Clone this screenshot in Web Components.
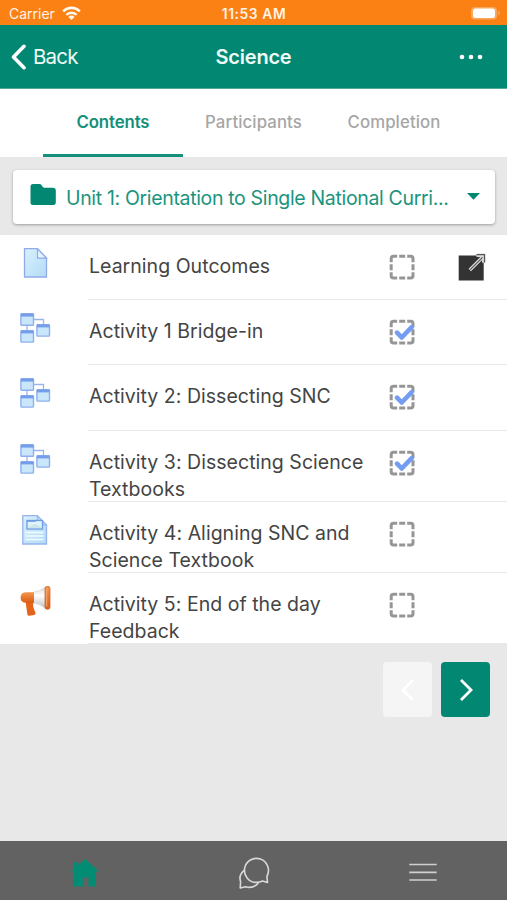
<!DOCTYPE html>
<html lang="en">
<head>
<meta charset="utf-8">
<title>Science</title>
<style>
  body {
    margin: 0;
    background: #e8e8e8;
    font-family: Inter, "Liberation Sans", sans-serif;
  }
</style>
</head>
<body>
<course-app>
  <status-bar slot="top" carrier="Carrier" time="11:53 AM"></status-bar>
  <nav-header slot="top" back="Back">Science</nav-header>
  <tab-strip slot="top">
    <tab-item active>Contents</tab-item>
    <tab-item>Participants</tab-item>
    <tab-item>Completion</tab-item>
  </tab-strip>
  <section-picker>Unit 1: Orientation to Single National Curri...</section-picker>
  <activity-list>
    <activity-row icon="page" external>Learning Outcomes</activity-row>
    <activity-row icon="tree" done>Activity 1 Bridge-in</activity-row>
    <activity-row icon="tree" done>Activity 2: Dissecting SNC</activity-row>
    <activity-row icon="tree" done tall>Activity 3: Dissecting Science<br>Textbooks</activity-row>
    <activity-row icon="document" tall>Activity 4: Aligning SNC and<br>Science Textbook</activity-row>
    <activity-row icon="megaphone" tall>Activity 5: End of the day<br>Feedback</activity-row>
  </activity-list>
  <section-pager></section-pager>
  <bottom-bar slot="bottom"></bottom-bar>
</course-app>

<script>
// Small helper: open shadow root with the given markup
function render(el, html) {
  el.attachShadow({ mode: 'open' }).innerHTML = html;
}

class CourseApp extends HTMLElement {
  connectedCallback() {
    render(this, `
      <style>
        :host {
          display: flex;
          flex-direction: column;
          height: 900px;
          overflow: hidden;
          background: #e8e8e8;
        }
        main {
          flex: 1;
          min-height: 0;
        }
      </style>
      <slot name="top"></slot>
      <main><slot></slot></main>
      <slot name="bottom"></slot>
    `);
  }
}

class StatusBar extends HTMLElement {
  connectedCallback() {
    render(this, `
      <style>
        :host {
          display: grid;
          grid-template-columns: 1fr auto 1fr;
          align-items: center;
          box-sizing: border-box;
          height: 25px;
          padding: 2px 6px 0 9px;
          background: #fb8114;
          color: #fff3e6;
          font-size: 14px;
        }
        .left {
          display: flex;
          align-items: center;
          gap: 7px;
        }
        .time {
          margin-right: 2px;
          font-size: 13.8px;
          font-weight: 600;
          letter-spacing: 0.6px;
        }
        .battery {
          justify-self: end;
        }
        svg {
          display: block;
        }
      </style>
      <div class="left">
        <span>${this.getAttribute('carrier')}</span>
        <svg width="19" height="15" viewBox="0 0 19 15" fill="none" stroke="#fff8f0" stroke-width="2.6">
          <path d="M1.2 5.4a11.6 11.6 0 0 1 16.6 0"/>
          <path d="M4.4 8.8a7.2 7.2 0 0 1 10.2 0"/>
          <path d="M9.5 14 6.4 10.9a4.4 4.4 0 0 1 6.2 0z" fill="#fff8f0" stroke="none"/>
        </svg>
      </div>
      <span class="time">${this.getAttribute('time')}</span>
      <svg class="battery" width="31" height="15" viewBox="0 0 31 15">
        <rect x="1" y="1" width="26" height="12.5" rx="4" fill="#fba75c"/>
        <rect x="3" y="2.5" width="22" height="9.5" rx="2.5" fill="#fff"/>
        <path d="M28.2 5v4.4q1.6-.6 1.6-2.2t-1.6-2.2" fill="#fba75c"/>
      </svg>
    `);
  }
}

class NavHeader extends HTMLElement {
  connectedCallback() {
    render(this, `
      <style>
        :host {
          display: grid;
          grid-template-columns: 1fr auto 1fr;
          align-items: center;
          box-sizing: border-box;
          height: 64px;
          padding: 0 24px 0 11px;
          background: #028872;
          border-bottom: 1px solid #52a897;
          color: #eefaf7;
        }
        .back {
          display: flex;
          align-items: center;
          gap: 7px;
          font-size: 20.5px;
          letter-spacing: -0.8px;
        }
        h1 {
          margin: 0 -13px 0 0;
          font-size: 20px;
          font-weight: 600;
          letter-spacing: -0.2px;
        }
        .more {
          justify-self: end;
        }
      </style>
      <div class="back">
        <svg width="15" height="26" viewBox="0 0 15 26" fill="none" stroke="#fff" stroke-width="3.6" stroke-linecap="round" stroke-linejoin="round">
          <path d="M13 2.3 2.5 13 13 23.7"/>
        </svg>
        <span>${this.getAttribute('back')}</span>
      </div>
      <h1><slot></slot></h1>
      <svg class="more" width="24" height="6" viewBox="0 0 24 6" fill="#fff">
        <circle cx="3" cy="3" r="2.3"/>
        <circle cx="12" cy="3" r="2.3"/>
        <circle cx="21" cy="3" r="2.3"/>
      </svg>
    `);
  }
}

class TabStrip extends HTMLElement {
  connectedCallback() {
    render(this, `
      <style>
        :host {
          display: grid;
          grid-template-columns: repeat(3, 140.5px);
          justify-content: center;
          height: 68px;
          background: #fff;
        }
      </style>
      <slot></slot>
    `);
  }
}

class TabItem extends HTMLElement {
  connectedCallback() {
    render(this, `
      <style>
        :host {
          display: flex;
          align-items: center;
          justify-content: center;
          box-sizing: border-box;
          padding-top: 1px;
          border-bottom: 3px solid transparent;
          color: #a6a6a6;
          font-size: 16.8px;
          font-weight: 500;
          letter-spacing: 0.1px;
        }
        :host([active]) {
          border-color: #14917a;
          color: #158f79;
          font-weight: 600;
          letter-spacing: -0.1px;
        }
      </style>
      <slot></slot>
    `);
  }
}

class SectionPicker extends HTMLElement {
  connectedCallback() {
    render(this, `
      <style>
        :host {
          display: block;
          padding: 13px 12px 11px 13px;
        }
        .card {
          display: flex;
          align-items: center;
          box-sizing: border-box;
          height: 54px;
          padding: 0 15px 0 17px;
          border-radius: 4px;
          background: #fff;
          box-shadow: 0 1px 3px rgba(0, 0, 0, 0.32);
          color: #1b947d;
          font-size: 19.5px;
          letter-spacing: -0.34px;
        }
        .folder {
          margin-top: -4px;
        }
        .label {
          flex: 1;
          margin-left: 10px;
          padding-top: 1px;
          white-space: nowrap;
        }
        .caret {
          margin-top: -2px;
        }
      </style>
      <div class="card">
        <svg class="folder" width="26" height="22" viewBox="0 0 26 22">
          <path d="M3 0h6.5q1.3 0 2 1l1.3 2q.5.8 1.7.8H23q2.8 0 2.8 2.8v11.6Q25.800 21 23 21H3Q.5 21 .5 18.500V2.500Q.5 0 3 0z" fill="#028872"/>
        </svg>
        <span class="label"><slot></slot></span>
        <svg class="caret" width="13" height="7" viewBox="0 0 13 7"><path d="M0 0h13L6.500 6.800z" fill="#028872"/></svg>
      </div>
    `);
  }
}

class ActivityList extends HTMLElement {
  connectedCallback() {
    render(this, `
      <style>
        :host {
          display: block;
          background: #fff;
        }
      </style>
      <slot></slot>
    `);
  }
}

const windowShape = (x, y) => `
  <rect x="${x}" y="${y}" width="12.600" height="11.500" rx="0.800" fill="#c9e6fa" stroke="#8fb0ee" stroke-width="1.400"/>
  <path d="M${x} ${y + 1.3}h12.600" stroke="#759eea" stroke-width="3"/>`;

const ICONS = {
  page: `
    <path d="M4.500 .7h13l9 9.300v19h-22z" fill="url(#sky)" stroke="#91aae8" stroke-width="1.300"/>
    <path d="M17.500 .9v9.200h9z" fill="#e4f5ff" stroke="#91aae8" stroke-width="1.200"/>`,
  tree: `
    <path d="M14 6.500h9.500V12M7 12v6" fill="none" stroke="#9ab5e8" stroke-width="1.300"/>
    ${windowShape(0.9, 0.8)}${windowShape(0.9, 17.6)}${windowShape(16.9, 11.6)}`,
  document: `
    <path d="M2.800 .7h14.500l9.200 9.300v19H2.800z" fill="url(#sky)" stroke="#96b3ec" stroke-width="1.300"/>
    <path d="M17.300 .8v9.200h9.100z" fill="#b5d8f8" stroke="#96b3ec"/>
    <rect x="7" y="5.500" width="15.500" height="8.500" fill="#dff3fd" stroke="#719ce0" stroke-width="1.300"/>
    <path d="M7 6h9" stroke="#6d9ae2" stroke-width="1.600"/>
    <path d="M8 13 14 9l4 1 4 3z" fill="#a8d4c4" opacity=".4"/>
    <path d="M5.500 17.500h18M5.500 21h18M5.500 24.500h18" stroke="#f2fbff" stroke-width="1.400"/>`,
  megaphone: `
    <path d="M5.500 15.500h8l-.5 4.500 2.500 7q.3 1.500-1.200 1.900l-5 .8q-1.600.2-1.900-1.300z" fill="#e4641c"/>
    <path d="M13 6.300Q20 5.500 25.500 1v21.500Q20 17.500 13 16.800z" fill="url(#silver)" stroke="#d2d2d2" stroke-width=".7"/>
    <path d="M14 6.200H5.500Q.6 6.800.6 11.500t4.900 5.200H14z" fill="url(#orange)"/>
    <rect x="25" y=".3" width="5" height="23" rx="2.300" fill="url(#orange)" stroke="#cf5b1b" stroke-width=".7"/>
    <path d="M26.700 2.500v18" stroke="#f7ae72" stroke-width="1"/>`
};

class ActivityRow extends HTMLElement {
  connectedCallback() {
    const check = this.hasAttribute('done')
      ? '<path d="M8 13.600l4.700 4.900L22.700 8.200" fill="none" stroke="#739cf2" stroke-width="4.600" stroke-linecap="round" stroke-linejoin="round"/>'
      : '';
    const external = this.hasAttribute('external')
      ? `<svg class="external" width="28" height="28" viewBox="0 0 28 28">
          <rect x=".7" y="2.500" width="25" height="25" fill="#333"/>
          <path d="M11.800 17 25 3.800M18.500 2.200h7.300v7.500" fill="none" stroke="#ddd" stroke-width="3.400"/>
          <path d="M12.200 16.600 24.500 4.300M18.500 1.600h8v8" fill="none" stroke="#555" stroke-width="1.200"/>
        </svg>`
      : '';
    render(this, `
      <style>
        :host {
          display: grid;
          grid-template-columns: 88px 301px 69px 1fr;
          grid-template-rows: 100%;
          align-items: start;
          height: 65.200px;
          color: #444;
          font-size: 19.5px;
          line-height: 27px;
        }
        :host([tall]) {
          height: 71.200px;
        }
        .icon {
          margin: 13px 0 0 20px;
        }
        .body {
          grid-column: 2 / -1;
          grid-row: 1;
          box-sizing: border-box;
          height: 100%;
          padding: 18px 0 0 1px;
          border-bottom: 1px solid #e9e9e9;
          letter-spacing: 0.030px;
          white-space: nowrap;
        }
        .box {
          grid-column: 3;
          grid-row: 1;
          margin-top: 19px;
        }
        .external {
          grid-column: 4;
          grid-row: 1;
          margin-top: 18px;
        }
      </style>
      <svg class="icon" width="31" height="30" viewBox="0 0 31 30">
        <defs>
          <linearGradient id="sky" x1="0" y1="0" x2="1" y2="1">
            <stop stop-color="#d9f0fc"/><stop offset="1" stop-color="#b2dcf7"/>
          </linearGradient>
          <linearGradient id="orange" x1="0" y1="0" x2="0" y2="1">
            <stop stop-color="#f4964e"/><stop offset="1" stop-color="#db5b13"/>
          </linearGradient>
          <linearGradient id="silver" x1="0" y1="0" x2="0" y2="1">
            <stop stop-color="#d6d6d6"/><stop offset=".4" stop-color="#fff"/><stop offset="1" stop-color="#bebebe"/>
          </linearGradient>
        </defs>
        ${ICONS[this.getAttribute('icon')]}
      </svg>
      <div class="body"><slot></slot></div>
      <svg class="box" width="26" height="26" viewBox="0 0 26 26">
        <path d="M2.200 8.200V4.500q0-2.300 2.300-2.300h3.700M18.200 2.200h3.500q2.300 0 2.300 2.300v3.700M24 18.200v3.500q0 2.300-2.300 2.300h-3.500M8.200 24H4.500q-2.300 0-2.300-2.300v-3.500M10.200 2.200h6M10.200 24h6M2.200 10.200v6M24 10.200v6" fill="none" stroke="#969696" stroke-width="3"/>
        ${check}
      </svg>
      ${external}
    `);
  }
}

class SectionPager extends HTMLElement {
  connectedCallback() {
    render(this, `
      <style>
        :host {
          display: flex;
          justify-content: flex-end;
          gap: 9px;
          padding: 18px 17px 0 0;
        }
        button {
          display: grid;
          place-items: center;
          width: 49px;
          height: 55px;
          padding: 0;
          border: 0;
          border-radius: 4px;
          background: #028872;
        }
        button:disabled {
          background: #f5f5f5;
        }
        svg {
          fill: none;
          stroke: #fff;
          stroke-width: 2.8;
        }
      </style>
      <button disabled aria-label="Previous"><svg width="14" height="22" viewBox="0 0 14 22"><path d="M12 1 2 11l10 10"/></svg></button>
      <button aria-label="Next"><svg width="14" height="22" viewBox="0 0 14 22"><path d="M2 1l10 10L2 21"/></svg></button>
    `);
  }
}

class BottomBar extends HTMLElement {
  connectedCallback() {
    render(this, `
      <style>
        :host {
          display: grid;
          grid-template-columns: repeat(3, 1fr);
          place-items: center;
          box-sizing: border-box;
          height: 59px;
          padding-top: 4px;
          background: #626262;
        }
      </style>
      <svg width="28" height="30" viewBox="0 0 28 30">
        <path d="M14 1 27 12.500l-2 1.500V28.500h-7.500v-9h-5.600v9H2.200V14L.8 12.800 3 10.500V4.200h4.300v3z" fill="#028c74"/>
      </svg>
      <svg width="32" height="32" viewBox="0 0 32 32" fill="none" stroke="#d9d9d9" stroke-width="1.600" stroke-linejoin="round">
        <path d="M29.500 25.500l-.6-6.200A12 12 0 1 0 18.500 25.400q3.300 0 6.100-1.400z"/>
        <path d="M6.700 13Q1.500 17 2 22l.6 3-.4 6 5.300-1.300q6 2 10.700-1.500 1.800-1.300 2.300-3"/>
      </svg>
      <svg width="28" height="19" viewBox="0 0 28 19" fill="none" stroke="#cfcfcf" stroke-width="1.700">
        <path d="M.3 1.500h27.400M.3 9.300h27.400M.3 17h27.400"/>
      </svg>
    `);
  }
}

customElements.define('course-app', CourseApp);
customElements.define('status-bar', StatusBar);
customElements.define('nav-header', NavHeader);
customElements.define('tab-strip', TabStrip);
customElements.define('tab-item', TabItem);
customElements.define('section-picker', SectionPicker);
customElements.define('activity-list', ActivityList);
customElements.define('activity-row', ActivityRow);
customElements.define('section-pager', SectionPager);
customElements.define('bottom-bar', BottomBar);
</script>
</body>
</html>
